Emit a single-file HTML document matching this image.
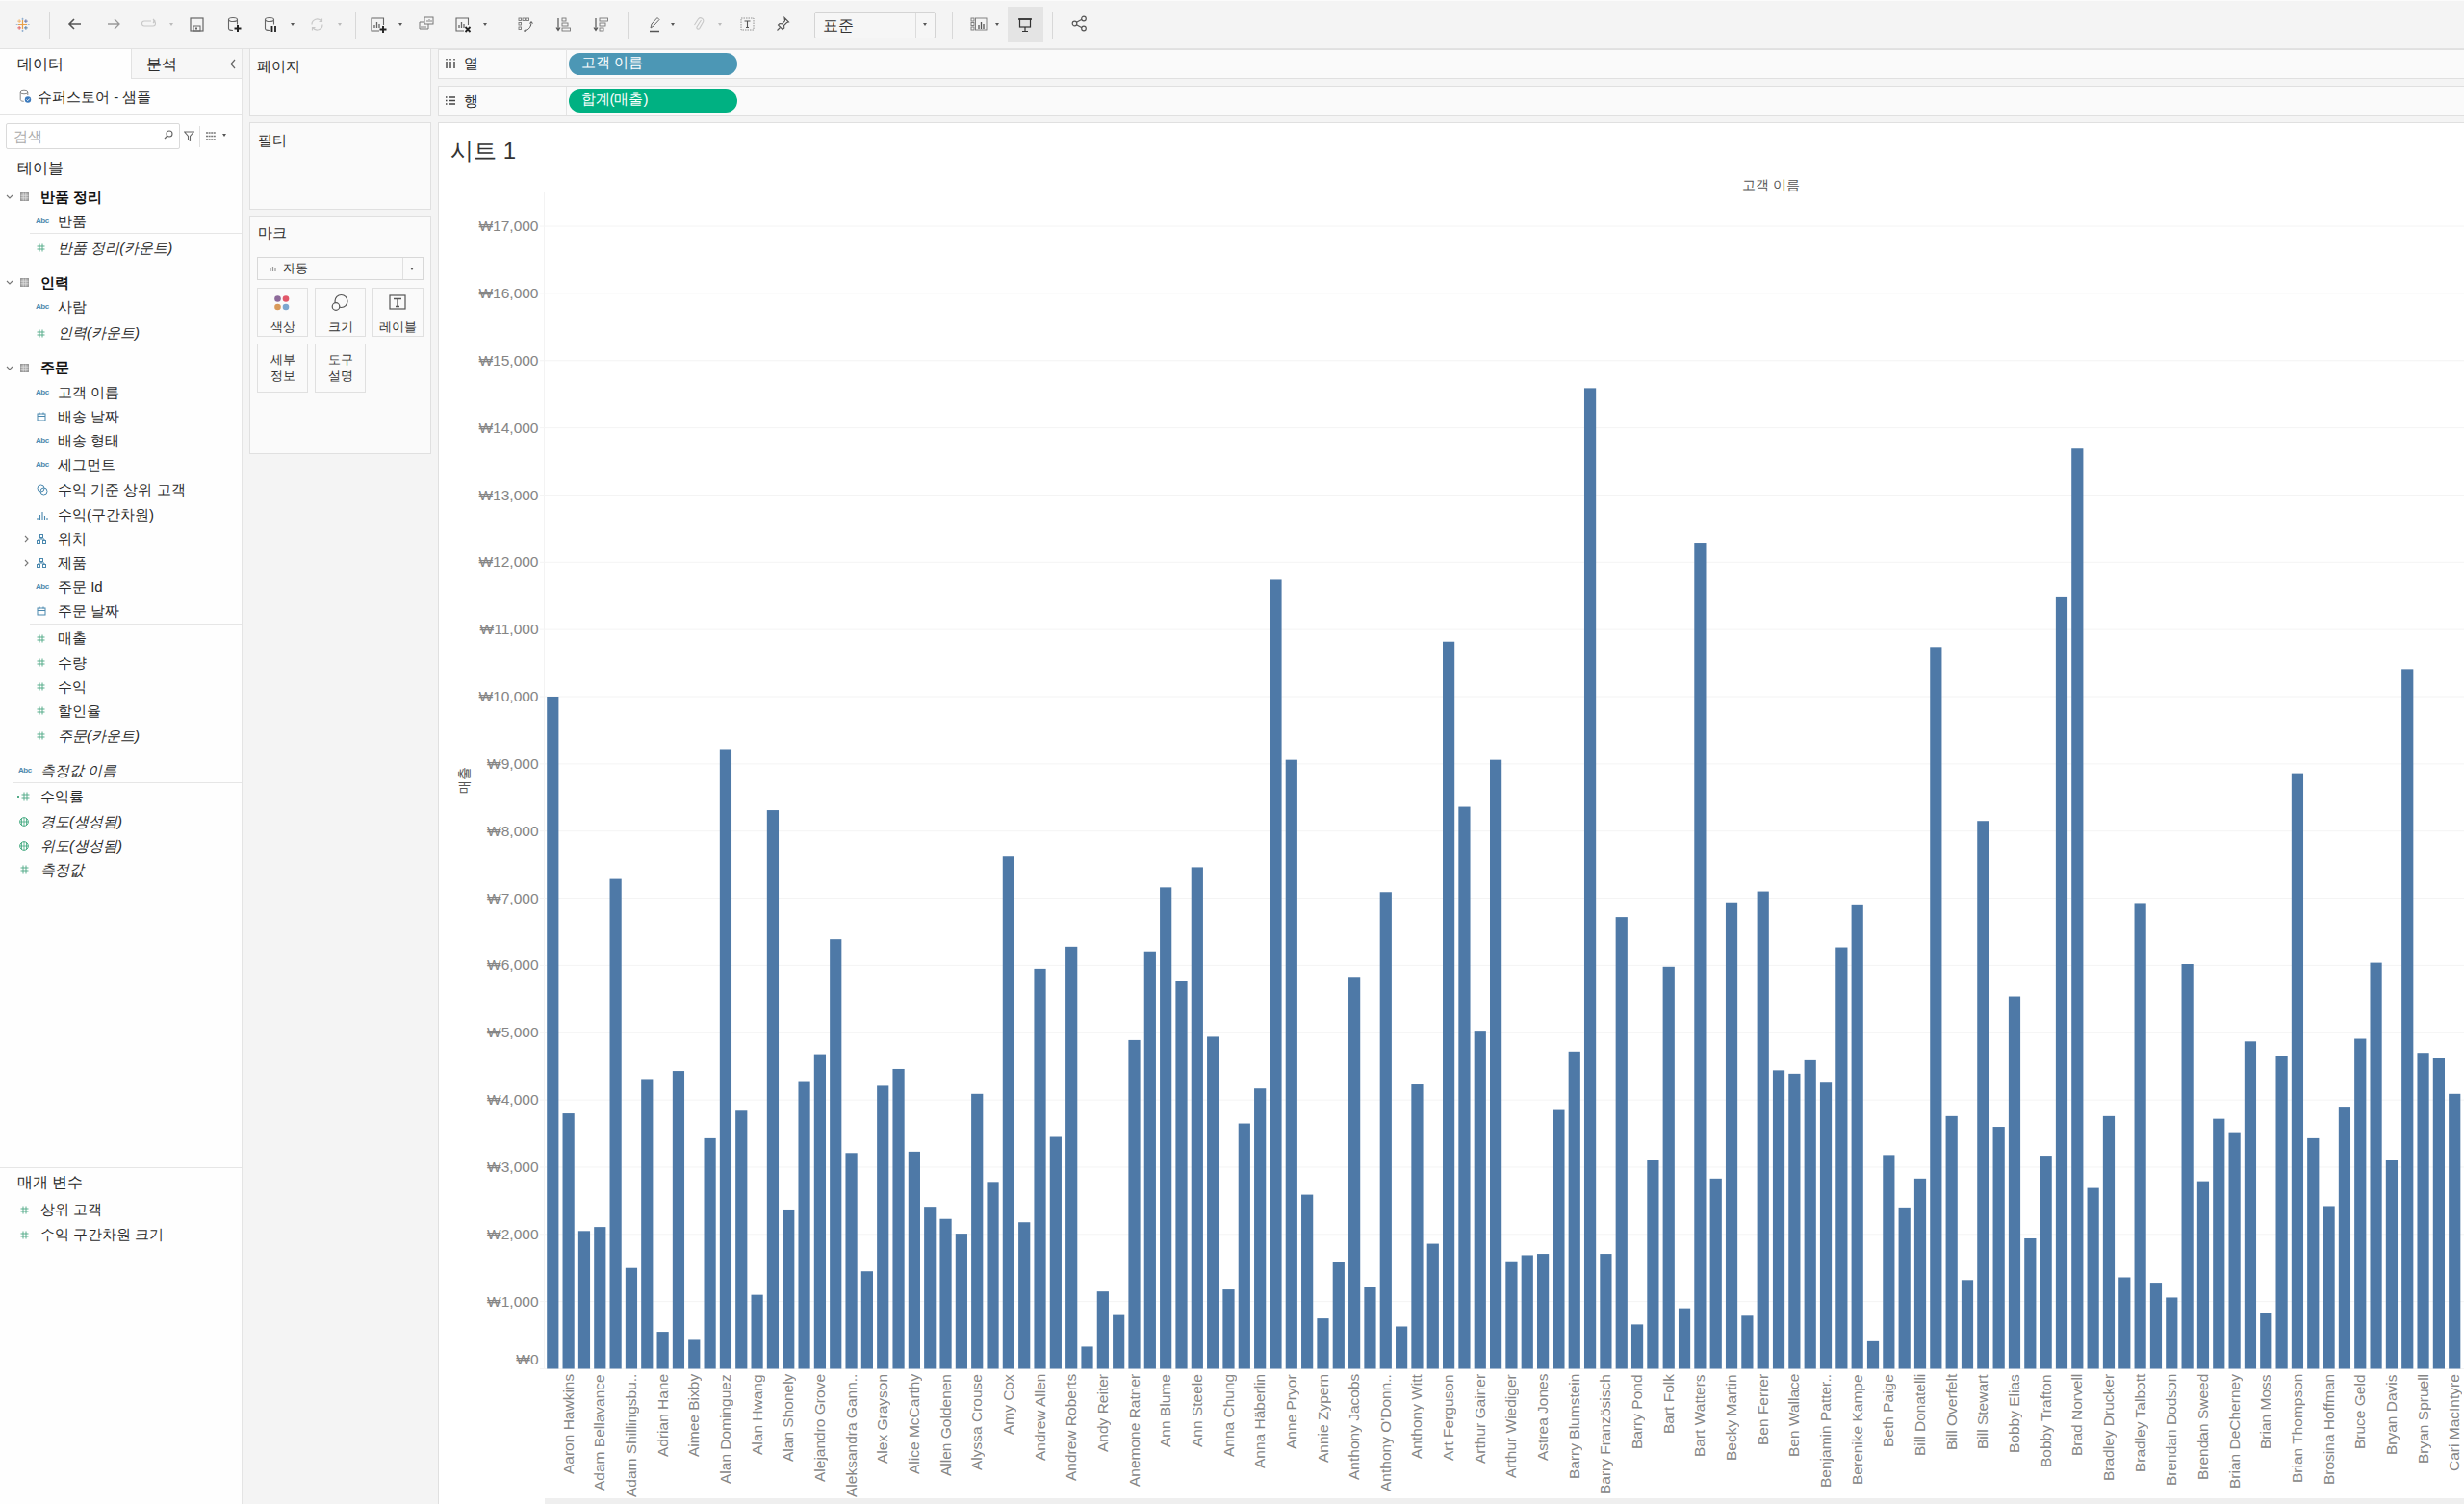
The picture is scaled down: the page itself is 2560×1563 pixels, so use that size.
<!DOCTYPE html>
<html><head><meta charset="utf-8">
<style>
*{box-sizing:border-box;margin:0;padding:0}
html,body{width:2560px;height:1563px;overflow:hidden;background:#f4f4f4;font-family:"Liberation Sans",sans-serif;color:#333}
.abs{position:absolute}
#toolbar{position:absolute;left:0;top:0;width:2560px;height:51px;background:#f4f4f4;border-bottom:1px solid #e2e2e2}
.sep{position:absolute;top:12px;width:1px;height:29px;background:#d8d8d8}
.dd{position:absolute;top:24px;width:0;height:0;border-left:2.5px solid transparent;border-right:2.5px solid transparent;border-top:3.5px solid #555}
.dd.l{border-top-color:#bbb}
.ic{position:absolute}
#left{position:absolute;left:0;top:51px;width:252px;height:1512px;background:#fefefe;border-right:1.5px solid #e4e4e4}
.tab2{position:absolute;left:136px;top:0;width:115px;height:31px;background:#f7f7f7;border-left:1px solid #e2e2e2;border-bottom:1px solid #e2e2e2}
.t15{font-size:15px;line-height:18px;white-space:nowrap}
.fl{position:absolute;font-size:15px;line-height:18px;white-space:nowrap;color:#2b2b2b}
.fi{font-style:italic}
.fb{font-weight:bold;color:#111}
.abc{position:absolute;font-size:8px;font-weight:bold;color:#4f88ad;letter-spacing:-0.5px;line-height:10px}
.hash{position:absolute;font-size:12px;color:#3aa37b;line-height:12px;font-weight:bold}
.hr{position:absolute;height:1px;background:#e6e6e6}
.card{position:absolute;background:#fafafa;border:1.5px solid #e0e0e0}
.mbtn{position:absolute;width:53px;height:51px;border:1px solid #e0e0e0;background:#fafafa;font-size:13px;line-height:16px;text-align:center;color:#333}
#chart{position:absolute;left:455px;top:127px;width:2105px;height:1436px;background:#fff;border-left:1.5px solid #e0e0e0;border-top:1.5px solid #e0e0e0}
.yl{position:absolute;left:0;width:559.5px;text-align:right;font-size:15.5px;line-height:20px;color:#858585;white-space:nowrap}
.xl{position:absolute;top:1428px;width:18px;height:130px;font-size:15.5px;line-height:18px;color:#858585;white-space:nowrap;writing-mode:vertical-rl;transform:rotate(180deg);text-align:end}
</style></head><body>

<div id="toolbar">
  <div class="abs" style="left:0;top:0;width:2560px;height:1px;background:#fbfbfb"></div>
  <!-- tableau logo -->
  <svg class="ic" style="left:15.5px;top:17.5px" width="15" height="15" viewBox="0 0 20 20">
    <g stroke-width="1.6">
      <path d="M10 4v12M4 10h12" stroke="#e8a04b"/>
      <path d="M14.5 3v5M12 5.5h5" stroke="#5c6ea8" stroke-width="1.2"/>
      <path d="M5.5 12v5M3 14.5h5" stroke="#e15759" stroke-width="1.2"/>
      <path d="M14.5 12v5M12 14.5h5" stroke="#4e79a7" stroke-width="1.2"/>
      <path d="M5.5 3v5M3 5.5h5" stroke="#f0b060" stroke-width="1.2"/>
      <path d="M10 1v3M8.5 2.5h3M10 17v3M8.5 18.5h3M1 10h2.5M17 10h2.5" stroke="#7aa0c8" stroke-width="0.9"/>
    </g>
  </svg>
  <div class="sep" style="left:51px"></div>
  <svg class="ic" style="left:70px;top:17px" width="16" height="16" viewBox="0 0 16 16"><path d="M14 8H2M7 3L2 8l5 5" stroke="#555" stroke-width="1.6" fill="none"/></svg>
  <svg class="ic" style="left:110px;top:17px" width="16" height="16" viewBox="0 0 16 16"><path d="M2 8h12M9 3l5 5-5 5" stroke="#999" stroke-width="1.3" fill="none"/></svg>
  <svg class="ic" style="left:146px;top:17px" width="18" height="16" viewBox="0 0 18 16"><path d="M11 5H4a2.2 2.2 0 0 0 0 5h9a2.2 2.2 0 0 0 0-5M13 3l2 2-2 2" stroke="#c8c8c8" stroke-width="1.1" fill="none"/></svg>
  <div class="dd l" style="left:176px"></div>
  <svg class="ic" style="left:197px;top:18px" width="15" height="15" viewBox="0 0 15 15"><rect x="1" y="1" width="13" height="13" fill="none" stroke="#666" stroke-width="1.2"/><rect x="4" y="9" width="7" height="5" fill="none" stroke="#666" stroke-width="1"/><rect x="6" y="10.5" width="2" height="2" fill="#666"/></svg>
  <svg class="ic" style="left:236px;top:17px" width="16" height="18" viewBox="0 0 16 18"><ellipse cx="6" cy="3.5" rx="4.5" ry="2" fill="none" stroke="#666" stroke-width="1.1"/><path d="M1.5 3.5v9c0 1.1 2 2 4.5 2M10.5 3.5v5" stroke="#666" stroke-width="1.1" fill="none"/><path d="M11 9v7M7.5 12.5h7" stroke="#222" stroke-width="2"/></svg>
  <svg class="ic" style="left:274px;top:17px" width="16" height="18" viewBox="0 0 16 18"><ellipse cx="6" cy="3.5" rx="4.5" ry="2" fill="none" stroke="#666" stroke-width="1.1"/><path d="M1.5 3.5v9c0 1.1 2 2 4.5 2M10.5 3.5v5" stroke="#666" stroke-width="1.1" fill="none"/><path d="M8.5 10v6M12 10v6" stroke="#222" stroke-width="1.8"/></svg>
  <div class="dd" style="left:302px"></div>
  <svg class="ic" style="left:321px;top:17px" width="17" height="17" viewBox="0 0 17 17"><path d="M3 8.5a5.5 5.5 0 0 1 10-3.2M14 8.5a5.5 5.5 0 0 1-10 3.2M13.5 2.5v3h-3M3.5 14.5v-3h3" stroke="#c8c8c8" stroke-width="1.2" fill="none"/></svg>
  <div class="dd l" style="left:351px"></div>
  <div class="sep" style="left:369px"></div>
  <svg class="ic" style="left:385px;top:18px" width="18" height="16" viewBox="0 0 18 16"><path d="M13.5 8V1H1v13h8" fill="none" stroke="#666" stroke-width="1.1"/><path d="M4 11V8M6.5 11V5M9 11V7" stroke="#666" stroke-width="1.3"/><path d="M13 9v7M9.5 12.5h7" stroke="#222" stroke-width="1.9"/></svg>
  <div class="dd" style="left:414px"></div>
  <svg class="ic" style="left:435px;top:17px" width="16" height="15" viewBox="0 0 16 15"><rect x="6" y="1" width="9" height="7" fill="none" stroke="#777" stroke-width="1"/><path d="M6 6H1v7h9V8" fill="none" stroke="#777" stroke-width="1"/><path d="M9 6V4M11 6V3M13 6V4M3 12v-2M5 12v-2M7 12v-2" stroke="#777" stroke-width="0.9"/></svg>
  <svg class="ic" style="left:473px;top:18px" width="17" height="16" viewBox="0 0 17 16"><path d="M13.5 8V1H1v13h8" fill="none" stroke="#666" stroke-width="1.1"/><path d="M4 11V8M6.5 11V5M9 11V7" stroke="#666" stroke-width="1.3"/><path d="M10.5 10l5 5M15.5 10l-5 5" stroke="#222" stroke-width="1.8"/></svg>
  <div class="dd" style="left:502px"></div>
  <div class="sep" style="left:519px"></div>
  <svg class="ic" style="left:538px;top:18px" width="16" height="15" viewBox="0 0 16 15"><rect x="1" y="1" width="2.5" height="2.5" fill="none" stroke="#777" stroke-width="0.9"/><rect x="5" y="1" width="2.5" height="2.5" fill="none" stroke="#777" stroke-width="0.9"/><rect x="9" y="1" width="2.5" height="2.5" fill="none" stroke="#777" stroke-width="0.9"/><rect x="1" y="5.5" width="2.5" height="2.5" fill="none" stroke="#777" stroke-width="0.9"/><rect x="1" y="10" width="2.5" height="2.5" fill="none" stroke="#777" stroke-width="0.9"/><path d="M14 5c0 4-2 8-7 9M12.5 6.5L14 4.5l1.5 2M8 12.5L6.5 14l1.5 1.5" stroke="#555" stroke-width="1" fill="none"/></svg>
  <svg class="ic" style="left:577px;top:18px" width="17" height="15" viewBox="0 0 17 15"><path d="M3 1v12M1 10.5l2 3 2-3" stroke="#555" stroke-width="1.2" fill="none"/><rect x="7" y="1" width="4" height="3" fill="none" stroke="#777" stroke-width="0.9"/><rect x="7" y="6" width="6" height="3" fill="none" stroke="#777" stroke-width="0.9"/><rect x="7" y="11" width="8.5" height="3" fill="none" stroke="#777" stroke-width="0.9"/></svg>
  <svg class="ic" style="left:616px;top:18px" width="17" height="15" viewBox="0 0 17 15"><path d="M3 1v12M1 10.5l2 3 2-3" stroke="#555" stroke-width="1.2" fill="none"/><rect x="7" y="1" width="8.5" height="3" fill="none" stroke="#777" stroke-width="0.9"/><rect x="7" y="6" width="6" height="3" fill="none" stroke="#777" stroke-width="0.9"/><rect x="7" y="11" width="4" height="3" fill="none" stroke="#777" stroke-width="0.9"/></svg>
  <div class="sep" style="left:652px"></div>
  <svg class="ic" style="left:672px;top:17px" width="16" height="17" viewBox="0 0 16 17"><path d="M4 12l1-4 6-6.5 2 2L7 10z" fill="none" stroke="#666" stroke-width="1"/><path d="M3 15.5h10" stroke="#555" stroke-width="1.5"/></svg>
  <div class="dd" style="left:697px"></div>
  <svg class="ic" style="left:720px;top:17px" width="12" height="16" viewBox="0 0 12 16"><path d="M8.5 4L4 11a1.6 1.6 0 0 0 2.7 1.6L10.5 6a3 3 0 0 0-5-3.2L1.5 9" fill="none" stroke="#c8c8c8" stroke-width="1.1"/></svg>
  <div class="dd l" style="left:746px"></div>
  <svg class="ic" style="left:769px;top:18px" width="15" height="14" viewBox="0 0 15 14"><rect x="1" y="1" width="13" height="12" fill="none" stroke="#888" stroke-width="0.9" stroke-dasharray="1.5 1"/><path d="M4.5 4h6M7.5 4v6.5M6 10.5h3" stroke="#555" stroke-width="1.1"/></svg>
  <svg class="ic" style="left:806px;top:17px" width="15" height="16" viewBox="0 0 15 16"><path d="M9 1.5l4.5 4.5-2 .5-3 3 .3 2.5L7 13.5 2.5 9 4 7.5l2.5.3 3-3z" fill="none" stroke="#555" stroke-width="1.1"/><path d="M4.5 11.5L1.5 14.5" stroke="#555" stroke-width="1.1"/></svg>
  <div class="abs" style="left:846px;top:12px;width:126px;height:28px;border:1px solid #d4d4d4;border-radius:2px;background:#f6f6f6">
    <div class="abs" style="left:8px;top:4px;font-size:16px;line-height:19px;color:#333">표준</div>
    <div class="abs" style="left:104px;top:0;width:1px;height:26px;background:#dcdcdc"></div>
    <div class="dd" style="left:112px;top:11px"></div>
  </div>
  <div class="sep" style="left:989px"></div>
  <svg class="ic" style="left:1008px;top:18px" width="18" height="14" viewBox="0 0 18 14"><rect x="1" y="1" width="3" height="3" fill="none" stroke="#777" stroke-width="0.9"/><rect x="1" y="5.5" width="3" height="3" fill="none" stroke="#777" stroke-width="0.9"/><rect x="1" y="10" width="3" height="3" fill="none" stroke="#777" stroke-width="0.9"/><rect x="5.5" y="1" width="11.5" height="12" fill="none" stroke="#777" stroke-width="0.9"/><path d="M9 12V8M11.5 12V5M14 12V7" stroke="#555" stroke-width="1.3"/></svg>
  <div class="dd" style="left:1034px"></div>
  <div class="abs" style="left:1047px;top:7px;width:37px;height:37px;background:#e4e4e4"></div>
  <svg class="ic" style="left:1057px;top:18px" width="16" height="16" viewBox="0 0 16 16"><path d="M1 2h14" stroke="#333" stroke-width="1.6"/><rect x="2.5" y="2" width="11" height="8" fill="none" stroke="#333" stroke-width="1.2"/><path d="M8 10v4M5 14.5h6" stroke="#333" stroke-width="1.2"/></svg>
  <div class="sep" style="left:1093px"></div>
  <svg class="ic" style="left:1113px;top:16px" width="17" height="17" viewBox="0 0 17 17"><circle cx="3.5" cy="8.5" r="2.3" fill="none" stroke="#555" stroke-width="1.2"/><circle cx="13" cy="3.5" r="2.3" fill="none" stroke="#555" stroke-width="1.2"/><circle cx="13" cy="13.5" r="2.3" fill="none" stroke="#555" stroke-width="1.2"/><path d="M5.5 7.3l5.5-3M5.5 9.7l5.5 3" stroke="#555" stroke-width="1.2"/></svg>
</div>

<div id="left">
  <div class="tab2"></div>
  <div class="fl" style="left:18px;top:6px;font-size:16px;line-height:19px">데이터</div>
  <div class="fl" style="left:152px;top:6px;font-size:16px;line-height:19px">분석</div>
  <svg class="ic" style="left:238px;top:10px" width="8" height="11" viewBox="0 0 8 11"><path d="M6 1L2 5.5 6 10" stroke="#666" stroke-width="1.2" fill="none"/></svg>
  <svg class="ic" style="left:20px;top:42px" width="13" height="15" viewBox="0 0 13 15"><ellipse cx="5" cy="3" rx="3.8" ry="1.8" fill="none" stroke="#888" stroke-width="1"/><path d="M1.2 3v7.5c0 1 1.5 1.8 3.5 1.8M8.8 3v3" stroke="#888" stroke-width="1" fill="none"/><circle cx="9" cy="10.5" r="3.2" fill="#3d7bbd"/><path d="M7.5 10.5l1.2 1.2 2-2.2" stroke="#fff" stroke-width="0.9" fill="none"/></svg>
  <div class="fl" style="left:39px;top:41px">슈퍼스토어 - 샘플</div>
  <div class="hr" style="left:0;top:67px;width:251px;background:#e4e4e4"></div>
  <!-- search -->
  <div class="abs" style="left:5.5px;top:77px;width:181px;height:27px;border:1px solid #dadada;background:#fff;border-radius:2px"></div>
  <div class="fl" style="left:14px;top:82px;color:#aaa">검색</div>
  <svg class="ic" style="left:170px;top:84px" width="10" height="10" viewBox="0 0 10 10"><circle cx="6" cy="4" r="3" fill="none" stroke="#666" stroke-width="1.1"/><path d="M4 6L1 9" stroke="#666" stroke-width="1.2"/></svg>
  <svg class="ic" style="left:191px;top:85px" width="11" height="11" viewBox="0 0 11 11"><path d="M0.7 1h9.6L6.5 5.5v4.8l-2-1.3V5.5z" fill="none" stroke="#666" stroke-width="1.1"/></svg>
  <div class="abs" style="left:207px;top:80px;width:1px;height:22px;background:#e0e0e0"></div>
  <svg class="ic" style="left:214px;top:86px" width="10" height="9" viewBox="0 0 10 9"><path d="M0 1h10M0 4.5h10M0 8h10" stroke="#777" stroke-width="1.6" stroke-dasharray="2 0.6"/></svg>
  <div class="dd" style="left:231px;top:88px"></div>

  <div class="fl" style="left:18px;top:114px;font-size:16px;line-height:19px">테이블</div>
  <svg class="ic" style="left:6px;top:151.3px" width="8" height="5" viewBox="0 0 8 5"><path d="M1 1l3 3 3-3" stroke="#777" stroke-width="1.1" fill="none"/></svg>
<svg class="ic" style="left:21px;top:149.3px" width="9" height="9" viewBox="0 0 9 9"><rect x="0.5" y="0.5" width="8" height="8" fill="#aaa" stroke="#999" stroke-width="1"/><path d="M0.5 3.2h8M0.5 5.8h8M3.2 0.5v8M5.8 0.5v8" stroke="#e8e8e8" stroke-width="0.7"/></svg>
<div class="fl fb" style="left:42px;top:144.8px">반품 정리</div>
<div class="abc" style="left:37px;top:174.0px">Abc</div>
<div class="fl " style="left:60px;top:170.0px">반품</div>
<div class="hr" style="left:31px;top:191.2px;width:220px"></div>
<svg class="ic" style="left:38px;top:202.1px" width="9" height="9" viewBox="0 0 9 9"><path d="M3 0.5v8M6 0.5v8M0.5 3h8M0.5 6h8" stroke="#52ab88" stroke-width="0.95"/></svg>
<div class="fl fi" style="left:60px;top:197.6px">반품 정리(카운트)</div>
<svg class="ic" style="left:6px;top:240.0px" width="8" height="5" viewBox="0 0 8 5"><path d="M1 1l3 3 3-3" stroke="#777" stroke-width="1.1" fill="none"/></svg>
<svg class="ic" style="left:21px;top:238.0px" width="9" height="9" viewBox="0 0 9 9"><rect x="0.5" y="0.5" width="8" height="8" fill="#aaa" stroke="#999" stroke-width="1"/><path d="M0.5 3.2h8M0.5 5.8h8M3.2 0.5v8M5.8 0.5v8" stroke="#e8e8e8" stroke-width="0.7"/></svg>
<div class="fl fb" style="left:42px;top:233.5px">인력</div>
<div class="abc" style="left:37px;top:262.9px">Abc</div>
<div class="fl " style="left:60px;top:258.9px">사람</div>
<div class="hr" style="left:31px;top:280.0px;width:220px"></div>
<svg class="ic" style="left:38px;top:290.9px" width="9" height="9" viewBox="0 0 9 9"><path d="M3 0.5v8M6 0.5v8M0.5 3h8M0.5 6h8" stroke="#52ab88" stroke-width="0.95"/></svg>
<div class="fl fi" style="left:60px;top:286.4px">인력(카운트)</div>
<svg class="ic" style="left:6px;top:328.8px" width="8" height="5" viewBox="0 0 8 5"><path d="M1 1l3 3 3-3" stroke="#777" stroke-width="1.1" fill="none"/></svg>
<svg class="ic" style="left:21px;top:326.8px" width="9" height="9" viewBox="0 0 9 9"><rect x="0.5" y="0.5" width="8" height="8" fill="#aaa" stroke="#999" stroke-width="1"/><path d="M0.5 3.2h8M0.5 5.8h8M3.2 0.5v8M5.8 0.5v8" stroke="#e8e8e8" stroke-width="0.7"/></svg>
<div class="fl fb" style="left:42px;top:322.3px">주문</div>
<div class="abc" style="left:37px;top:352.0px">Abc</div>
<div class="fl " style="left:60px;top:348.0px">고객 이름</div>
<svg class="ic" style="left:38px;top:376.9px" width="10" height="10" viewBox="0 0 10 10"><rect x="1" y="2" width="8" height="7" fill="none" stroke="#4a88ae" stroke-width="1"/><path d="M1 4.5h8M3 0.5v2M7 0.5v2" stroke="#4a88ae" stroke-width="1"/></svg>
<div class="fl " style="left:60px;top:372.9px">배송 날짜</div>
<div class="abc" style="left:37px;top:402.3px">Abc</div>
<div class="fl " style="left:60px;top:398.3px">배송 형태</div>
<div class="abc" style="left:37px;top:427.4px">Abc</div>
<div class="fl " style="left:60px;top:423.4px">세그먼트</div>
<svg class="ic" style="left:38px;top:451.8px" width="12" height="12" viewBox="0 0 12 12"><circle cx="4.5" cy="4.5" r="3.5" fill="none" stroke="#4a88ae" stroke-width="1"/><circle cx="7.5" cy="7.5" r="3.5" fill="none" stroke="#4a88ae" stroke-width="1"/></svg>
<div class="fl " style="left:60px;top:448.8px">수익 기준 상위 고객</div>
<svg class="ic" style="left:38px;top:478.7px" width="12" height="10" viewBox="0 0 12 10"><path d="M1 10V8M3.5 10V5M6 10V2M8.5 10V6M11 10V8" stroke="#4a88ae" stroke-width="1.1"/></svg>
<div class="fl " style="left:60px;top:474.7px">수익(구간차원)</div>
<svg class="ic" style="left:25px;top:504.7px" width="5" height="8" viewBox="0 0 5 8"><path d="M1 1l3 3-3 3" stroke="#777" stroke-width="1.1" fill="none"/></svg>
<svg class="ic" style="left:38px;top:503.7px" width="10" height="10" viewBox="0 0 10 10"><rect x="3.5" y="0.5" width="3" height="3" fill="none" stroke="#4a88ae" stroke-width="1"/><rect x="0.5" y="6.5" width="3" height="3" fill="none" stroke="#4a88ae" stroke-width="1"/><rect x="6.5" y="6.5" width="3" height="3" fill="none" stroke="#4a88ae" stroke-width="1"/><path d="M5 3.5v1.5M2 6.5V5h6v1.5" stroke="#4a88ae" stroke-width="1" fill="none"/></svg>
<div class="fl " style="left:60px;top:499.7px">위치</div>
<svg class="ic" style="left:25px;top:529.6px" width="5" height="8" viewBox="0 0 5 8"><path d="M1 1l3 3-3 3" stroke="#777" stroke-width="1.1" fill="none"/></svg>
<svg class="ic" style="left:38px;top:528.6px" width="10" height="10" viewBox="0 0 10 10"><rect x="3.5" y="0.5" width="3" height="3" fill="none" stroke="#4a88ae" stroke-width="1"/><rect x="0.5" y="6.5" width="3" height="3" fill="none" stroke="#4a88ae" stroke-width="1"/><rect x="6.5" y="6.5" width="3" height="3" fill="none" stroke="#4a88ae" stroke-width="1"/><path d="M5 3.5v1.5M2 6.5V5h6v1.5" stroke="#4a88ae" stroke-width="1" fill="none"/></svg>
<div class="fl " style="left:60px;top:524.6px">제품</div>
<div class="abc" style="left:37px;top:554.2px">Abc</div>
<div class="fl " style="left:60px;top:550.2px">주문 Id</div>
<svg class="ic" style="left:38px;top:579.1px" width="10" height="10" viewBox="0 0 10 10"><rect x="1" y="2" width="8" height="7" fill="none" stroke="#4a88ae" stroke-width="1"/><path d="M1 4.5h8M3 0.5v2M7 0.5v2" stroke="#4a88ae" stroke-width="1"/></svg>
<div class="fl " style="left:60px;top:575.1px">주문 날짜</div>
<div class="hr" style="left:31px;top:597.0px;width:220px"></div>
<svg class="ic" style="left:38px;top:607.5px" width="9" height="9" viewBox="0 0 9 9"><path d="M3 0.5v8M6 0.5v8M0.5 3h8M0.5 6h8" stroke="#52ab88" stroke-width="0.95"/></svg>
<div class="fl " style="left:60px;top:603.0px">매출</div>
<svg class="ic" style="left:38px;top:633.1px" width="9" height="9" viewBox="0 0 9 9"><path d="M3 0.5v8M6 0.5v8M0.5 3h8M0.5 6h8" stroke="#52ab88" stroke-width="0.95"/></svg>
<div class="fl " style="left:60px;top:628.6px">수량</div>
<svg class="ic" style="left:38px;top:658.2px" width="9" height="9" viewBox="0 0 9 9"><path d="M3 0.5v8M6 0.5v8M0.5 3h8M0.5 6h8" stroke="#52ab88" stroke-width="0.95"/></svg>
<div class="fl " style="left:60px;top:653.7px">수익</div>
<svg class="ic" style="left:38px;top:683.3px" width="9" height="9" viewBox="0 0 9 9"><path d="M3 0.5v8M6 0.5v8M0.5 3h8M0.5 6h8" stroke="#52ab88" stroke-width="0.95"/></svg>
<div class="fl " style="left:60px;top:678.8px">할인율</div>
<svg class="ic" style="left:38px;top:709.2px" width="9" height="9" viewBox="0 0 9 9"><path d="M3 0.5v8M6 0.5v8M0.5 3h8M0.5 6h8" stroke="#52ab88" stroke-width="0.95"/></svg>
<div class="fl fi" style="left:60px;top:704.7px">주문(카운트)</div>
<div class="abc" style="left:19px;top:745.0px">Abc</div>
<div class="fl fi" style="left:42px;top:741.0px">측정값 이름</div>
<div class="hr" style="left:13px;top:761.9px;width:238px"></div>
<svg class="ic" style="left:22px;top:772.3px" width="9" height="9" viewBox="0 0 9 9"><path d="M3 0.5v8M6 0.5v8M0.5 3h8M0.5 6h8" stroke="#52ab88" stroke-width="0.95"/></svg>
<div class="abs" style="left:17.5px;top:775.8px;width:2.5px;height:2px;background:#52ab88"></div>
<div class="fl " style="left:42px;top:767.8px">수익률</div>
<svg class="ic" style="left:20px;top:797.7px" width="10" height="10" viewBox="0 0 10 10"><circle cx="5" cy="5" r="4.3" fill="none" stroke="#3fa77d" stroke-width="1"/><path d="M5 0.7v8.6M0.7 5h8.6M2.5 1.8v6.4M7.5 1.8v6.4" stroke="#3fa77d" stroke-width="0.8"/></svg>
<div class="fl fi" style="left:42px;top:793.7px">경도(생성됨)</div>
<svg class="ic" style="left:20px;top:822.8px" width="10" height="10" viewBox="0 0 10 10"><circle cx="5" cy="5" r="4.3" fill="none" stroke="#3fa77d" stroke-width="1"/><path d="M5 0.7v8.6M0.7 5h8.6M2.5 1.8v6.4M7.5 1.8v6.4" stroke="#3fa77d" stroke-width="0.8"/></svg>
<div class="fl fi" style="left:42px;top:818.8px">위도(생성됨)</div>
<svg class="ic" style="left:21px;top:848.4px" width="9" height="9" viewBox="0 0 9 9"><path d="M3 0.5v8M6 0.5v8M0.5 3h8M0.5 6h8" stroke="#52ab88" stroke-width="0.95"/></svg>
<div class="fl fi" style="left:42px;top:843.9px">측정값</div>
<div class="hr" style="left:0px;top:1161.5px;width:251px"></div>
<div class="fl" style="left:18px;top:1167.9px;font-size:16px;line-height:19px">매개 변수</div>
<svg class="ic" style="left:21px;top:1201.7px" width="9" height="9" viewBox="0 0 9 9"><path d="M3 0.5v8M6 0.5v8M0.5 3h8M0.5 6h8" stroke="#52ab88" stroke-width="0.95"/></svg>
<div class="fl " style="left:42px;top:1197.2px">상위 고객</div>
<svg class="ic" style="left:21px;top:1227.6px" width="9" height="9" viewBox="0 0 9 9"><path d="M3 0.5v8M6 0.5v8M0.5 3h8M0.5 6h8" stroke="#52ab88" stroke-width="0.95"/></svg>
<div class="fl " style="left:42px;top:1223.1px">수익 구간차원 크기</div>
</div>

<div class="card" style="left:258.5px;top:50px;width:189px;height:71px"></div>
<div class="fl" style="left:267px;top:60px">페이지</div>
<div class="card" style="left:258.5px;top:127px;width:189px;height:91px"></div>
<div class="fl" style="left:268px;top:137px">필터</div>
<div class="card" style="left:258.5px;top:224px;width:189px;height:247.5px"></div>
<div class="fl" style="left:268px;top:233px">마크</div>
<div class="abs" style="left:267px;top:267px;width:173px;height:24px;border:1px solid #d8d8d8;background:#fafafa"></div>
<svg class="ic" style="left:280px;top:276px" width="7" height="6" viewBox="0 0 7 6"><path d="M1 6V3M3.5 6V1M6 6V2" stroke="#999" stroke-width="1.2"/></svg>
<div class="fl" style="left:294px;top:270px;font-size:13px">자동</div>
<div class="abs" style="left:418px;top:268px;width:1px;height:22px;background:#e0e0e0"></div>
<div class="dd" style="left:426px;top:278px"></div>
<div class="mbtn" style="left:267px;top:299px"><svg style="position:absolute;left:16px;top:6px" width="18" height="18" viewBox="0 0 18 18"><circle cx="4.5" cy="4.5" r="3.3" fill="#8d6a9a"/><circle cx="13" cy="4.5" r="3.3" fill="#e15769"/><circle cx="4.5" cy="13" r="3.3" fill="#d99a5a"/><circle cx="13" cy="13" r="3.3" fill="#7ba6cf"/></svg><div style="position:absolute;left:0;width:51px;top:32px">색상</div></div>
<div class="mbtn" style="left:327px;top:299px"><svg style="position:absolute;left:15px;top:5px" width="20" height="20" viewBox="0 0 20 20"><circle cx="11.5" cy="8" r="6.5" fill="none" stroke="#555" stroke-width="1.2"/><circle cx="6" cy="13.5" r="3.8" fill="#fafafa" stroke="#555" stroke-width="1.2"/></svg><div style="position:absolute;left:0;width:51px;top:32px">크기</div></div>
<div class="mbtn" style="left:387px;top:299px"><svg style="position:absolute;left:16px;top:6px" width="18" height="16" viewBox="0 0 18 16"><rect x="1" y="1" width="16" height="14" fill="none" stroke="#555" stroke-width="1.2"/><path d="M5 4.5h8M9 4.5v8M7 12.5h4" stroke="#555" stroke-width="1.3"/></svg><div style="position:absolute;left:0;width:51px;top:32px">레이블</div></div>
<div class="mbtn" style="left:267px;top:357px"><div style="position:absolute;left:0;width:51px;top:7px;line-height:17px">세부<br>정보</div></div>
<div class="mbtn" style="left:327px;top:357px"><div style="position:absolute;left:0;width:51px;top:7px;line-height:17px">도구<br>설명</div></div>

<!-- shelves -->
<div class="card" style="left:455px;top:50.5px;width:2110px;height:31.5px"></div>
<div class="abs" style="left:587.5px;top:51px;width:1.5px;height:30px;background:#e4e4e4"></div>
<svg class="ic" style="left:463px;top:61px" width="10" height="10" viewBox="0 0 10 10"><path d="M1 0v1.5M5 0v1.5M9 0v1.5M1 3v7M5 3v7M9 3v7" stroke="#444" stroke-width="1.4"/></svg>
<div class="fl" style="left:482px;top:57px">열</div>
<div class="abs" style="left:591px;top:54.5px;width:175px;height:23.5px;border-radius:12px;background:#4c97b5"></div>
<div class="fl" style="left:603.5px;top:55.5px;color:#fff">고객 이름</div>

<div class="card" style="left:455px;top:89px;width:2110px;height:31.5px"></div>
<div class="abs" style="left:587.5px;top:90px;width:1.5px;height:30px;background:#e4e4e4"></div>
<svg class="ic" style="left:463px;top:100px" width="10" height="9" viewBox="0 0 10 9"><path d="M0 1h1.5M3 1h7M0 4.5h1.5M3 4.5h7M0 8h1.5M3 8h7" stroke="#444" stroke-width="1.4"/></svg>
<div class="fl" style="left:482px;top:96px">행</div>
<div class="abs" style="left:591px;top:92.5px;width:175px;height:24px;border-radius:12px;background:#00b182"></div>
<div class="fl" style="left:603.5px;top:94px;color:#fff">합계(매출)</div>

<div id="chart"></div>
<div class="abs" style="left:468px;top:143px;font-size:24px;line-height:28px;color:#333">시트 1</div>
<div class="abs" style="left:1800px;top:183px;width:80px;text-align:center;font-size:14px;line-height:18px;color:#555">고객 이름</div>
<div class="abs" style="left:452px;top:801.5px;width:60px;height:18px;text-align:center;font-size:14px;line-height:18px;color:#555;transform:rotate(-90deg)">매출</div>
<div class="abs" style="left:565px;top:200px;width:1px;height:1222px;background:#f3f3f3"></div>
<svg class="abs" style="left:0;top:0" width="2560" height="1563">
<rect x="561" y="1422.00" width="1999" height="1" fill="#f4f4f4"/>
<rect x="561" y="1352.15" width="1999" height="1" fill="#f4f4f4"/>
<rect x="561" y="1282.30" width="1999" height="1" fill="#f4f4f4"/>
<rect x="561" y="1212.45" width="1999" height="1" fill="#f4f4f4"/>
<rect x="561" y="1142.60" width="1999" height="1" fill="#f4f4f4"/>
<rect x="561" y="1072.75" width="1999" height="1" fill="#f4f4f4"/>
<rect x="561" y="1002.90" width="1999" height="1" fill="#f4f4f4"/>
<rect x="561" y="933.05" width="1999" height="1" fill="#f4f4f4"/>
<rect x="561" y="863.20" width="1999" height="1" fill="#f4f4f4"/>
<rect x="561" y="793.35" width="1999" height="1" fill="#f4f4f4"/>
<rect x="561" y="723.50" width="1999" height="1" fill="#f4f4f4"/>
<rect x="561" y="653.65" width="1999" height="1" fill="#f4f4f4"/>
<rect x="561" y="583.80" width="1999" height="1" fill="#f4f4f4"/>
<rect x="561" y="513.95" width="1999" height="1" fill="#f4f4f4"/>
<rect x="561" y="444.10" width="1999" height="1" fill="#f4f4f4"/>
<rect x="561" y="374.25" width="1999" height="1" fill="#f4f4f4"/>
<rect x="561" y="304.40" width="1999" height="1" fill="#f4f4f4"/>
<rect x="561" y="234.55" width="1999" height="1" fill="#f4f4f4"/>
<rect x="568.20" y="724.00" width="12.2" height="698.50" fill="#4e79a7"/>
<rect x="584.53" y="1157.07" width="12.2" height="265.43" fill="#4e79a7"/>
<rect x="600.86" y="1279.31" width="12.2" height="143.19" fill="#4e79a7"/>
<rect x="617.19" y="1275.12" width="12.2" height="147.38" fill="#4e79a7"/>
<rect x="633.52" y="912.60" width="12.2" height="509.90" fill="#4e79a7"/>
<rect x="649.85" y="1317.72" width="12.2" height="104.78" fill="#4e79a7"/>
<rect x="666.18" y="1121.45" width="12.2" height="301.05" fill="#4e79a7"/>
<rect x="682.51" y="1384.08" width="12.2" height="38.42" fill="#4e79a7"/>
<rect x="698.84" y="1113.06" width="12.2" height="309.44" fill="#4e79a7"/>
<rect x="715.17" y="1392.46" width="12.2" height="30.04" fill="#4e79a7"/>
<rect x="731.50" y="1182.91" width="12.2" height="239.59" fill="#4e79a7"/>
<rect x="747.83" y="778.48" width="12.2" height="644.02" fill="#4e79a7"/>
<rect x="764.16" y="1154.28" width="12.2" height="268.22" fill="#4e79a7"/>
<rect x="780.49" y="1345.66" width="12.2" height="76.84" fill="#4e79a7"/>
<rect x="796.82" y="842.05" width="12.2" height="580.45" fill="#4e79a7"/>
<rect x="813.15" y="1256.96" width="12.2" height="165.54" fill="#4e79a7"/>
<rect x="829.48" y="1123.54" width="12.2" height="298.96" fill="#4e79a7"/>
<rect x="845.81" y="1095.60" width="12.2" height="326.90" fill="#4e79a7"/>
<rect x="862.14" y="976.16" width="12.2" height="446.34" fill="#4e79a7"/>
<rect x="878.47" y="1198.28" width="12.2" height="224.22" fill="#4e79a7"/>
<rect x="894.80" y="1321.22" width="12.2" height="101.28" fill="#4e79a7"/>
<rect x="911.13" y="1128.43" width="12.2" height="294.07" fill="#4e79a7"/>
<rect x="927.46" y="1110.97" width="12.2" height="311.53" fill="#4e79a7"/>
<rect x="943.79" y="1196.88" width="12.2" height="225.62" fill="#4e79a7"/>
<rect x="960.12" y="1254.16" width="12.2" height="168.34" fill="#4e79a7"/>
<rect x="976.45" y="1266.73" width="12.2" height="155.77" fill="#4e79a7"/>
<rect x="992.78" y="1282.10" width="12.2" height="140.40" fill="#4e79a7"/>
<rect x="1009.11" y="1136.81" width="12.2" height="285.69" fill="#4e79a7"/>
<rect x="1025.44" y="1228.32" width="12.2" height="194.18" fill="#4e79a7"/>
<rect x="1041.77" y="890.24" width="12.2" height="532.26" fill="#4e79a7"/>
<rect x="1058.10" y="1270.23" width="12.2" height="152.27" fill="#4e79a7"/>
<rect x="1074.43" y="1006.89" width="12.2" height="415.61" fill="#4e79a7"/>
<rect x="1090.76" y="1181.52" width="12.2" height="240.98" fill="#4e79a7"/>
<rect x="1107.09" y="983.84" width="12.2" height="438.66" fill="#4e79a7"/>
<rect x="1123.42" y="1399.45" width="12.2" height="23.05" fill="#4e79a7"/>
<rect x="1139.75" y="1342.17" width="12.2" height="80.33" fill="#4e79a7"/>
<rect x="1156.08" y="1366.62" width="12.2" height="55.88" fill="#4e79a7"/>
<rect x="1172.41" y="1080.93" width="12.2" height="341.57" fill="#4e79a7"/>
<rect x="1188.74" y="988.73" width="12.2" height="433.77" fill="#4e79a7"/>
<rect x="1205.07" y="922.37" width="12.2" height="500.13" fill="#4e79a7"/>
<rect x="1221.40" y="1019.47" width="12.2" height="403.03" fill="#4e79a7"/>
<rect x="1237.73" y="901.42" width="12.2" height="521.08" fill="#4e79a7"/>
<rect x="1254.06" y="1077.44" width="12.2" height="345.06" fill="#4e79a7"/>
<rect x="1270.39" y="1340.08" width="12.2" height="82.42" fill="#4e79a7"/>
<rect x="1286.72" y="1167.55" width="12.2" height="254.95" fill="#4e79a7"/>
<rect x="1303.05" y="1131.23" width="12.2" height="291.27" fill="#4e79a7"/>
<rect x="1319.38" y="602.46" width="12.2" height="820.04" fill="#4e79a7"/>
<rect x="1335.71" y="789.66" width="12.2" height="632.84" fill="#4e79a7"/>
<rect x="1352.04" y="1241.59" width="12.2" height="180.91" fill="#4e79a7"/>
<rect x="1368.37" y="1370.11" width="12.2" height="52.39" fill="#4e79a7"/>
<rect x="1384.70" y="1311.44" width="12.2" height="111.06" fill="#4e79a7"/>
<rect x="1401.03" y="1015.27" width="12.2" height="407.23" fill="#4e79a7"/>
<rect x="1417.36" y="1337.98" width="12.2" height="84.52" fill="#4e79a7"/>
<rect x="1433.69" y="927.26" width="12.2" height="495.24" fill="#4e79a7"/>
<rect x="1450.02" y="1378.49" width="12.2" height="44.01" fill="#4e79a7"/>
<rect x="1466.35" y="1127.03" width="12.2" height="295.47" fill="#4e79a7"/>
<rect x="1482.68" y="1292.58" width="12.2" height="129.92" fill="#4e79a7"/>
<rect x="1499.01" y="666.72" width="12.2" height="755.78" fill="#4e79a7"/>
<rect x="1515.34" y="838.55" width="12.2" height="583.95" fill="#4e79a7"/>
<rect x="1531.67" y="1071.15" width="12.2" height="351.35" fill="#4e79a7"/>
<rect x="1548.00" y="789.66" width="12.2" height="632.84" fill="#4e79a7"/>
<rect x="1564.33" y="1310.74" width="12.2" height="111.76" fill="#4e79a7"/>
<rect x="1580.66" y="1304.45" width="12.2" height="118.05" fill="#4e79a7"/>
<rect x="1596.99" y="1303.06" width="12.2" height="119.44" fill="#4e79a7"/>
<rect x="1613.32" y="1153.58" width="12.2" height="268.92" fill="#4e79a7"/>
<rect x="1629.65" y="1092.81" width="12.2" height="329.69" fill="#4e79a7"/>
<rect x="1645.98" y="403.39" width="12.2" height="1019.11" fill="#4e79a7"/>
<rect x="1662.31" y="1303.06" width="12.2" height="119.44" fill="#4e79a7"/>
<rect x="1678.64" y="953.11" width="12.2" height="469.39" fill="#4e79a7"/>
<rect x="1694.97" y="1376.40" width="12.2" height="46.10" fill="#4e79a7"/>
<rect x="1711.30" y="1205.27" width="12.2" height="217.23" fill="#4e79a7"/>
<rect x="1727.63" y="1004.80" width="12.2" height="417.70" fill="#4e79a7"/>
<rect x="1743.96" y="1359.63" width="12.2" height="62.87" fill="#4e79a7"/>
<rect x="1760.29" y="564.04" width="12.2" height="858.46" fill="#4e79a7"/>
<rect x="1776.62" y="1224.82" width="12.2" height="197.68" fill="#4e79a7"/>
<rect x="1792.95" y="937.74" width="12.2" height="484.76" fill="#4e79a7"/>
<rect x="1809.28" y="1367.32" width="12.2" height="55.18" fill="#4e79a7"/>
<rect x="1825.61" y="926.57" width="12.2" height="495.93" fill="#4e79a7"/>
<rect x="1841.94" y="1112.37" width="12.2" height="310.13" fill="#4e79a7"/>
<rect x="1858.27" y="1115.86" width="12.2" height="306.64" fill="#4e79a7"/>
<rect x="1874.60" y="1101.89" width="12.2" height="320.61" fill="#4e79a7"/>
<rect x="1890.93" y="1124.24" width="12.2" height="298.26" fill="#4e79a7"/>
<rect x="1907.26" y="984.54" width="12.2" height="437.96" fill="#4e79a7"/>
<rect x="1923.59" y="939.84" width="12.2" height="482.66" fill="#4e79a7"/>
<rect x="1939.92" y="1393.86" width="12.2" height="28.64" fill="#4e79a7"/>
<rect x="1956.25" y="1200.38" width="12.2" height="222.12" fill="#4e79a7"/>
<rect x="1972.58" y="1254.86" width="12.2" height="167.64" fill="#4e79a7"/>
<rect x="1988.91" y="1224.82" width="12.2" height="197.68" fill="#4e79a7"/>
<rect x="2005.24" y="672.31" width="12.2" height="750.19" fill="#4e79a7"/>
<rect x="2021.57" y="1159.86" width="12.2" height="262.64" fill="#4e79a7"/>
<rect x="2037.90" y="1330.30" width="12.2" height="92.20" fill="#4e79a7"/>
<rect x="2054.23" y="853.22" width="12.2" height="569.28" fill="#4e79a7"/>
<rect x="2070.56" y="1171.04" width="12.2" height="251.46" fill="#4e79a7"/>
<rect x="2086.89" y="1035.53" width="12.2" height="386.97" fill="#4e79a7"/>
<rect x="2103.22" y="1286.99" width="12.2" height="135.51" fill="#4e79a7"/>
<rect x="2119.55" y="1201.08" width="12.2" height="221.42" fill="#4e79a7"/>
<rect x="2135.88" y="619.92" width="12.2" height="802.58" fill="#4e79a7"/>
<rect x="2152.21" y="466.25" width="12.2" height="956.25" fill="#4e79a7"/>
<rect x="2168.54" y="1234.60" width="12.2" height="187.90" fill="#4e79a7"/>
<rect x="2184.87" y="1159.86" width="12.2" height="262.64" fill="#4e79a7"/>
<rect x="2201.20" y="1327.50" width="12.2" height="95.00" fill="#4e79a7"/>
<rect x="2217.53" y="938.44" width="12.2" height="484.06" fill="#4e79a7"/>
<rect x="2233.86" y="1333.09" width="12.2" height="89.41" fill="#4e79a7"/>
<rect x="2250.19" y="1348.46" width="12.2" height="74.04" fill="#4e79a7"/>
<rect x="2266.52" y="1002.00" width="12.2" height="420.50" fill="#4e79a7"/>
<rect x="2282.85" y="1227.62" width="12.2" height="194.88" fill="#4e79a7"/>
<rect x="2299.18" y="1162.66" width="12.2" height="259.84" fill="#4e79a7"/>
<rect x="2315.51" y="1176.63" width="12.2" height="245.87" fill="#4e79a7"/>
<rect x="2331.84" y="1082.33" width="12.2" height="340.17" fill="#4e79a7"/>
<rect x="2348.17" y="1364.52" width="12.2" height="57.98" fill="#4e79a7"/>
<rect x="2364.50" y="1097.00" width="12.2" height="325.50" fill="#4e79a7"/>
<rect x="2380.83" y="803.63" width="12.2" height="618.87" fill="#4e79a7"/>
<rect x="2397.16" y="1182.91" width="12.2" height="239.59" fill="#4e79a7"/>
<rect x="2413.49" y="1253.46" width="12.2" height="169.04" fill="#4e79a7"/>
<rect x="2429.82" y="1150.09" width="12.2" height="272.41" fill="#4e79a7"/>
<rect x="2446.15" y="1079.54" width="12.2" height="342.96" fill="#4e79a7"/>
<rect x="2462.48" y="1000.61" width="12.2" height="421.89" fill="#4e79a7"/>
<rect x="2478.81" y="1205.27" width="12.2" height="217.23" fill="#4e79a7"/>
<rect x="2495.14" y="695.36" width="12.2" height="727.14" fill="#4e79a7"/>
<rect x="2511.47" y="1094.20" width="12.2" height="328.30" fill="#4e79a7"/>
<rect x="2527.80" y="1099.09" width="12.2" height="323.41" fill="#4e79a7"/>
<rect x="2544.13" y="1136.81" width="12.2" height="285.69" fill="#4e79a7"/>
</svg>
<div class="yl" style="top:1403.0px">₩0</div>
<div class="yl" style="top:1342.7px">₩1,000</div>
<div class="yl" style="top:1272.8px">₩2,000</div>
<div class="yl" style="top:1203.0px">₩3,000</div>
<div class="yl" style="top:1133.1px">₩4,000</div>
<div class="yl" style="top:1063.2px">₩5,000</div>
<div class="yl" style="top:993.4px">₩6,000</div>
<div class="yl" style="top:923.5px">₩7,000</div>
<div class="yl" style="top:853.7px">₩8,000</div>
<div class="yl" style="top:783.9px">₩9,000</div>
<div class="yl" style="top:714.0px">₩10,000</div>
<div class="yl" style="top:644.2px">₩11,000</div>
<div class="yl" style="top:574.3px">₩12,000</div>
<div class="yl" style="top:504.5px">₩13,000</div>
<div class="yl" style="top:434.6px">₩14,000</div>
<div class="yl" style="top:364.8px">₩15,000</div>
<div class="yl" style="top:294.9px">₩16,000</div>
<div class="yl" style="top:225.1px">₩17,000</div>
<div class="xl" style="left:581.6px">Aaron Hawkins</div>
<div class="xl" style="left:614.3px">Adam Bellavance</div>
<div class="xl" style="left:647.0px">Adam Shillingsbu..</div>
<div class="xl" style="left:679.6px">Adrian Hane</div>
<div class="xl" style="left:712.3px">Aimee Bixby</div>
<div class="xl" style="left:744.9px">Alan Dominguez</div>
<div class="xl" style="left:777.6px">Alan Hwang</div>
<div class="xl" style="left:810.3px">Alan Shonely</div>
<div class="xl" style="left:842.9px">Alejandro Grove</div>
<div class="xl" style="left:875.6px">Aleksandra Gann..</div>
<div class="xl" style="left:908.2px">Alex Grayson</div>
<div class="xl" style="left:940.9px">Alice McCarthy</div>
<div class="xl" style="left:973.6px">Allen Goldenen</div>
<div class="xl" style="left:1006.2px">Alyssa Crouse</div>
<div class="xl" style="left:1038.9px">Amy Cox</div>
<div class="xl" style="left:1071.5px">Andrew Allen</div>
<div class="xl" style="left:1104.2px">Andrew Roberts</div>
<div class="xl" style="left:1136.8px">Andy Reiter</div>
<div class="xl" style="left:1169.5px">Anemone Ratner</div>
<div class="xl" style="left:1202.2px">Ann Blume</div>
<div class="xl" style="left:1234.8px">Ann Steele</div>
<div class="xl" style="left:1267.5px">Anna Chung</div>
<div class="xl" style="left:1300.1px">Anna Häberlin</div>
<div class="xl" style="left:1332.8px">Anne Pryor</div>
<div class="xl" style="left:1365.5px">Annie Zypern</div>
<div class="xl" style="left:1398.1px">Anthony Jacobs</div>
<div class="xl" style="left:1430.8px">Anthony O&#x27;Donn..</div>
<div class="xl" style="left:1463.4px">Anthony Witt</div>
<div class="xl" style="left:1496.1px">Art Ferguson</div>
<div class="xl" style="left:1528.8px">Arthur Gainer</div>
<div class="xl" style="left:1561.4px">Arthur Wiediger</div>
<div class="xl" style="left:1594.1px">Astrea Jones</div>
<div class="xl" style="left:1626.7px">Barry Blumstein</div>
<div class="xl" style="left:1659.4px">Barry Französisch</div>
<div class="xl" style="left:1692.1px">Barry Pond</div>
<div class="xl" style="left:1724.7px">Bart Folk</div>
<div class="xl" style="left:1757.4px">Bart Watters</div>
<div class="xl" style="left:1790.0px">Becky Martin</div>
<div class="xl" style="left:1822.7px">Ben Ferrer</div>
<div class="xl" style="left:1855.4px">Ben Wallace</div>
<div class="xl" style="left:1888.0px">Benjamin Patter..</div>
<div class="xl" style="left:1920.7px">Berenike Kampe</div>
<div class="xl" style="left:1953.3px">Beth Paige</div>
<div class="xl" style="left:1986.0px">Bill Donatelli</div>
<div class="xl" style="left:2018.7px">Bill Overfelt</div>
<div class="xl" style="left:2051.3px">Bill Stewart</div>
<div class="xl" style="left:2084.0px">Bobby Elias</div>
<div class="xl" style="left:2116.7px">Bobby Trafton</div>
<div class="xl" style="left:2149.3px">Brad Norvell</div>
<div class="xl" style="left:2182.0px">Bradley Drucker</div>
<div class="xl" style="left:2214.6px">Bradley Talbott</div>
<div class="xl" style="left:2247.3px">Brendan Dodson</div>
<div class="xl" style="left:2279.9px">Brendan Sweed</div>
<div class="xl" style="left:2312.6px">Brian DeCherney</div>
<div class="xl" style="left:2345.3px">Brian Moss</div>
<div class="xl" style="left:2377.9px">Brian Thompson</div>
<div class="xl" style="left:2410.6px">Brosina Hoffman</div>
<div class="xl" style="left:2443.2px">Bruce Geld</div>
<div class="xl" style="left:2475.9px">Bryan Davis</div>
<div class="xl" style="left:2508.6px">Bryan Spruell</div>
<div class="xl" style="left:2541.2px">Cari MacIntyre</div>
<div class="abs" style="left:566px;top:1557px;width:1994px;height:6px;background:#efefef"></div>
</body></html>
